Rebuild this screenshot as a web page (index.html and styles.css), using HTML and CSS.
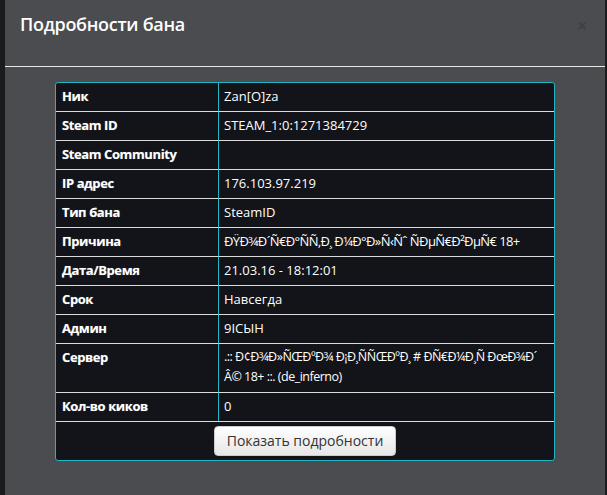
FILE: index.html
```html
<!DOCTYPE html>
<html lang="ru">
<head>
    <meta charset="UTF-8">
    <meta name="viewport" content="width=device-width, initial-scale=1.0">
    <title>Подробности бана</title>
    <link rel="stylesheet" href="styles.css">
</head>
<body>
    <div class="modal">
        <div class="modal-header">
            <h4 class="modal-title">Подробности бана</h4>
            <span class="close">&times;</span>
        </div>
        <div class="modal-body">
            <table class="ban-table">
                <tr>
                    <td class="label">Ник</td>
                    <td>Zan[O]za</td>
                </tr>
                <tr>
                    <td class="label">Steam ID</td>
                    <td>STEAM_1:0:1271384729</td>
                </tr>
                <tr>
                    <td class="label">Steam Community</td>
                    <td></td>
                </tr>
                <tr>
                    <td class="label">IP адрес</td>
                    <td>176.103.97.219</td>
                </tr>
                <tr>
                    <td class="label">Тип бана</td>
                    <td>SteamID</td>
                </tr>
                <tr>
                    <td class="label">Причина</td>
                    <td class="garbled">ÐŸÐ¾Ð´Ñ€Ð°ÑÑ‚Ð¸ Ð¼Ð°Ð»Ñ‹Ñˆ ÑÐµÑ€Ð²ÐµÑ€ 18+</td>
                </tr>
                <tr>
                    <td class="label">Дата/Время</td>
                    <td>21.03.16 - 18:12:01</td>
                </tr>
                <tr>
                    <td class="label">Срок</td>
                    <td>Навсегда</td>
                </tr>
                <tr>
                    <td class="label">Админ</td>
                    <td>9ICЫH</td>
                </tr>
                <tr>
                    <td class="label">Сервер</td>
                    <td class="garbled server">.:: Ð¢Ð¾Ð»ÑŒÐºÐ¾ Ð¡Ð¸ÑÑŒÐºÐ¸ # ÐÑ€Ð¼Ð¸Ñ ÐœÐ¾Ð<wbr>´ Â© 18+ ::. (de_inferno)</td>
                </tr>
                <tr>
                    <td class="label">Кол-во киков</td>
                    <td>0</td>
                </tr>
                <tr>
                    <td class="actions" colspan="2">
                        <button class="btn">Показать подробности</button>
                    </td>
                </tr>
            </table>
        </div>
    </div>
</body>
</html>
```

FILE: styles.css
```css
  body {
      margin: 0;
      background-color: #1a1b1c;
      font-family: "Open Sans", Arial, sans-serif;
      overflow: hidden;
  }
  .modal {
      margin-left: 5px;
      width: 600px;
      min-height: 495px;
      background-color: #4a4c4f;
  }
  .modal-header {
      display: flex;
      justify-content: space-between;
      align-items: flex-start;
      height: 51px;
      padding: 15px 15px 0 15px;
      border-bottom: 1px solid #e8e8e8;
  }
  .modal-title {
      margin: 0;
      font-size: 18px;
      font-weight: 600;
      line-height: 1.1;
      letter-spacing: -0.3px;
      color: #fff;
  }
  .close {
      font-size: 17px;
      font-weight: bold;
      line-height: 1;
      color: #000;
      opacity: .15;
      margin-top: 2px;
      margin-right: 3px;
  }
  .modal-body {
      padding: 15px 50px;
  }
  .ban-table {
      width: 500px;
      border: 1px solid #1fb6c6;
      border-radius: 3px;
      border-spacing: 0;
      background-color: #121419;
      font-size: 13px;
      line-height: 20px;
      color: #fff;
  }
  .ban-table td {
      padding: 3px 6px 5px 6px;
      border-top: 1px solid #dcdcdc;
      vertical-align: top;
  }
  .ban-table tr:first-child td {
      border-top: none;
  }
  .ban-table td + td {
      padding-left: 5px;
      border-left: 1px solid #1fb6c6;
  }
  .ban-table td.label {
      width: 150px;
      font-weight: bold;
      letter-spacing: -0.4px;
      text-shadow: 0 0 1px rgba(255, 255, 255, .35);
  }
  .ban-table td.garbled {
      letter-spacing: -0.6px;
  }
  .ban-table td.server {
      font-size: 12.5px;
      letter-spacing: -0.5px;
      padding-right: 16px;
  }
  .ban-table td.actions {
      padding: 4px 6px;
      text-align: center;
  }
  .btn {
      font-family: "Open Sans", Arial, sans-serif;
      font-size: 14px;
      line-height: 20px;
      color: #333;
      padding: 4px 12px;
      border: 1px solid #ccc;
      border-radius: 4px;
      background: linear-gradient(#ffffff, #e6e6e6);
      box-shadow: 0 1px 1px rgba(0, 0, 0, .1);
  }
```
